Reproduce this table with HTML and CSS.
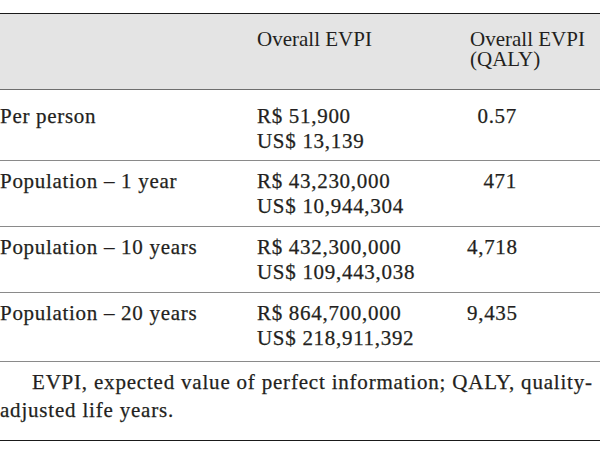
FILE: index.html
```html
<!DOCTYPE html>
<html lang="en">
<head>
<meta charset="utf-8">
<title>EVPI table</title>
<link rel="stylesheet" href="styles.css">
</head>
<body>
<div class="wrap">
  <table class="evpi">
    <thead>
      <tr>
        <th class="c1"></th>
        <th class="c2">Overall EVPI</th>
        <th class="c3">Overall EVPI<br>(QALY)</th>
      </tr>
    </thead>
    <tbody>
      <tr class="first">
        <td class="c1">Per person</td>
        <td class="c2">R$ 51,900<br>US$ 13,139</td>
        <td class="c3 num">0.57</td>
      </tr>
      <tr>
        <td class="c1">Population – 1 year</td>
        <td class="c2">R$ 43,230,000<br>US$ 10,944,304</td>
        <td class="c3 num">471</td>
      </tr>
      <tr>
        <td class="c1">Population – 10 years</td>
        <td class="c2">R$ 432,300,000<br>US$ 109,443,038</td>
        <td class="c3 num">4,718</td>
      </tr>
      <tr class="last">
        <td class="c1">Population – 20 years</td>
        <td class="c2">R$ 864,700,000<br>US$ 218,911,392</td>
        <td class="c3 num">9,435</td>
      </tr>
    </tbody>
  </table>
  <p class="note">EVPI, expected value of perfect information; QALY, quality-<br>adjusted life years.</p>
</div>
</body>
</html>
```

FILE: styles.css
```css
html, body {
  margin: 0;
  padding: 0;
  background: #ffffff;
}

body {
  color: #231f20;
  font-family: "Liberation Serif", "Times New Roman", serif;
  overflow: hidden;
}

.wrap {
  width: 600px;
  padding-top: 13px;
}

.evpi {
  width: 600px;
  border-collapse: collapse;
  border-top: 1px solid #1a1a1a;
  table-layout: fixed;
}

.evpi th {
  background: #e4e4e4;
  font-weight: normal;
  text-align: left;
  vertical-align: top;
  font-size: 21px;
  line-height: 20px;
  padding: 15px 0 20px 0;
  border-bottom: 1px solid #6e6e6e;
}

.evpi td {
  vertical-align: top;
  font-size: 21px;
  letter-spacing: 0.7px;
  line-height: 25px;
  padding: 8px 0 7px 0;
  border-bottom: 1px solid #8a8a8a;
  -webkit-text-stroke: 0.25px #231f20;
}

.evpi tr.first td {
  padding-top: 14px;
  padding-bottom: 6px;
}

.evpi tr.last td {
  padding-bottom: 10px;
}

.c1 {
  width: 257px;
  padding-left: 1px;
}

.c2 {
  width: 210px;
}

.evpi th.c3 {
  padding-left: 3px;
}

.evpi td.num {
  text-align: right;
  padding-right: 83px;
}

.note {
  margin: 0;
  padding: 6px 0 16px 0;
  font-size: 21px;
  letter-spacing: 0.8px;
  line-height: 28px;
  text-indent: 32px;
  white-space: nowrap;
  border-bottom: 1px solid #1a1a1a;
  -webkit-text-stroke: 0.25px #231f20;
}
```
